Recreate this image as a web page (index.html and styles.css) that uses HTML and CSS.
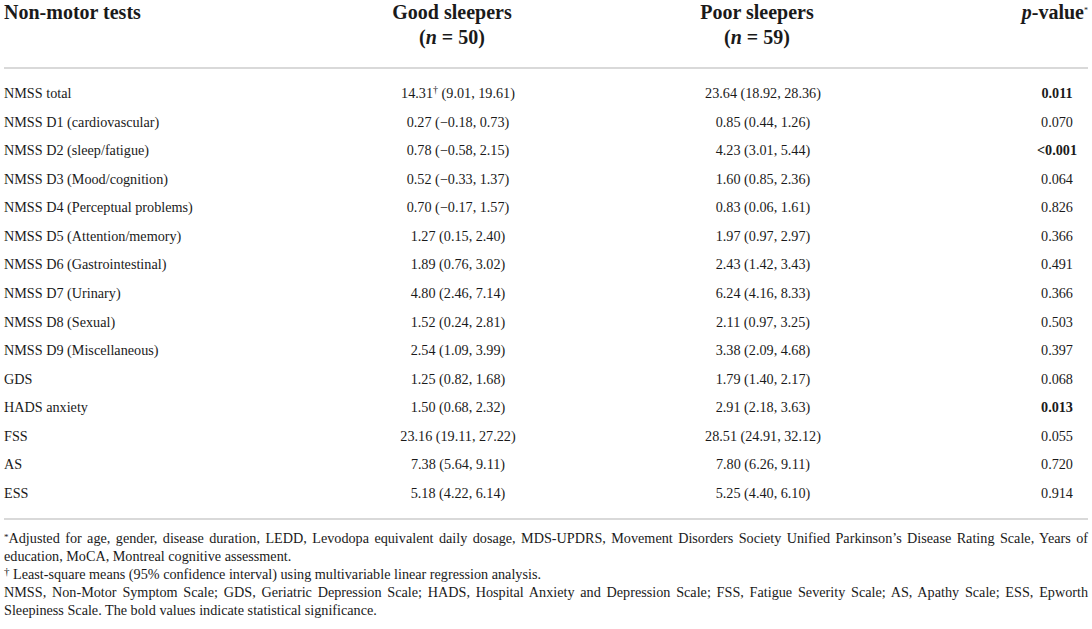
FILE: index.html
```html
<!DOCTYPE html>
<html lang="en">
<head>
<meta charset="utf-8">
<title>Non-motor tests</title>
<link rel="stylesheet" href="styles.css">
</head>
<body>
<div class="page">
  <div class="grid head">
    <div class="c1 hcell">Non-motor tests</div>
    <div class="c2 hcell">Good sleepers<br>(<i>n</i> = 50)</div>
    <div class="c3 hcell">Poor sleepers<br>(<i>n</i> = 59)</div>
    <div class="c4 hcell hp"><i>p</i>-value<sup class="ast">*</sup></div>
  </div>
  <div class="rule"></div>
  <div class="grid body">
    <div class="c1">NMSS total</div><div class="c2">14.31<sup class="dag">†</sup> (9.01, 19.61)</div><div class="c3">23.64 (18.92, 28.36)</div><div class="c4"><b>0.011</b></div>
    <div class="c1">NMSS D1 (cardiovascular)</div><div class="c2">0.27 (−0.18, 0.73)</div><div class="c3">0.85 (0.44, 1.26)</div><div class="c4">0.070</div>
    <div class="c1">NMSS D2 (sleep/fatigue)</div><div class="c2">0.78 (−0.58, 2.15)</div><div class="c3">4.23 (3.01, 5.44)</div><div class="c4"><b>&lt;0.001</b></div>
    <div class="c1">NMSS D3 (Mood/cognition)</div><div class="c2">0.52 (−0.33, 1.37)</div><div class="c3">1.60 (0.85, 2.36)</div><div class="c4">0.064</div>
    <div class="c1">NMSS D4 (Perceptual problems)</div><div class="c2">0.70 (−0.17, 1.57)</div><div class="c3">0.83 (0.06, 1.61)</div><div class="c4">0.826</div>
    <div class="c1">NMSS D5 (Attention/memory)</div><div class="c2">1.27 (0.15, 2.40)</div><div class="c3">1.97 (0.97, 2.97)</div><div class="c4">0.366</div>
    <div class="c1">NMSS D6 (Gastrointestinal)</div><div class="c2">1.89 (0.76, 3.02)</div><div class="c3">2.43 (1.42, 3.43)</div><div class="c4">0.491</div>
    <div class="c1">NMSS D7 (Urinary)</div><div class="c2">4.80 (2.46, 7.14)</div><div class="c3">6.24 (4.16, 8.33)</div><div class="c4">0.366</div>
    <div class="c1">NMSS D8 (Sexual)</div><div class="c2">1.52 (0.24, 2.81)</div><div class="c3">2.11 (0.97, 3.25)</div><div class="c4">0.503</div>
    <div class="c1">NMSS D9 (Miscellaneous)</div><div class="c2">2.54 (1.09, 3.99)</div><div class="c3">3.38 (2.09, 4.68)</div><div class="c4">0.397</div>
    <div class="c1">GDS</div><div class="c2">1.25 (0.82, 1.68)</div><div class="c3">1.79 (1.40, 2.17)</div><div class="c4">0.068</div>
    <div class="c1">HADS anxiety</div><div class="c2">1.50 (0.68, 2.32)</div><div class="c3">2.91 (2.18, 3.63)</div><div class="c4"><b>0.013</b></div>
    <div class="c1">FSS</div><div class="c2">23.16 (19.11, 27.22)</div><div class="c3">28.51 (24.91, 32.12)</div><div class="c4">0.055</div>
    <div class="c1">AS</div><div class="c2">7.38 (5.64, 9.11)</div><div class="c3">7.80 (6.26, 9.11)</div><div class="c4">0.720</div>
    <div class="c1">ESS</div><div class="c2">5.18 (4.22, 6.14)</div><div class="c3">5.25 (4.40, 6.10)</div><div class="c4">0.914</div>
  </div>
  <div class="rule"></div>
  <div class="notes">
    <p><span class="jline"><sup class="nast">*</sup>Adjusted for age, gender, disease duration, LEDD, Levodopa equivalent daily dosage, MDS-UPDRS, Movement Disorders Society Unified Parkinson’s Disease Rating Scale, Years of</span><span class="line">education, MoCA, Montreal cognitive assessment.</span></p>
    <p><span class="line"><sup class="ndag">†</sup> Least-square means (95% confidence interval) using multivariable linear regression analysis.</span></p>
    <p><span class="jline">NMSS, Non-Motor Symptom Scale; GDS, Geriatric Depression Scale; HADS, Hospital Anxiety and Depression Scale; FSS, Fatigue Severity Scale; AS, Apathy Scale; ESS, Epworth</span><span class="line">Sleepiness Scale. The bold values indicate statistical significance.</span></p>
  </div>
</div>
</body>
</html>
```
FILE: styles.css
```css
html, body {
  margin: 0;
  padding: 0;
  background: #ffffff;
}
body {
  font-family: "Liberation Serif", "Times New Roman", serif;
  color: #1a1a1a;
}
.page {
  padding: 0 4px;
  width: 1084px;
}
.grid {
  display: grid;
  grid-template-columns: 302px 304px 306px 1fr;
}
.c2, .c3 {
  text-align: center;
}
.c4 {
  justify-self: end;
  width: 62px;
  text-align: center;
  white-space: nowrap;
}
.head {
  font-size: 20px;
  line-height: 25px;
  font-weight: bold;
  padding-bottom: 17px;
}
.head .c2, .head .c3 {
  padding-right: 12px;
}
.head .hp {
  width: auto;
  text-align: right;
}
.head i {
  font-style: italic;
}
.ast {
  font-size: 8px;
  vertical-align: 6px;
  line-height: 0;
  font-weight: normal;
}
.rule {
  height: 2px;
  background: #d9d9d9;
}
.body {
  font-size: 14.2px;
  line-height: 28.57px;
  padding: 10px 0 11px;
}
.dag {
  font-size: 10px;
  line-height: 0;
  vertical-align: 5px;
}
.notes {
  padding-top: 9px;
  font-size: 14.2px;
  line-height: 18px;
}
.notes p {
  margin: 0;
}
.line {
  display: block;
  white-space: nowrap;
}
.jline {
  display: block;
  text-align: justify;
  text-align-last: justify;
  white-space: nowrap;
  word-spacing: 0;
}
.nast {
  font-size: 9px;
  line-height: 0;
  vertical-align: 3px;
}
.ndag {
  font-size: 11px;
  line-height: 0;
  vertical-align: 4px;
}
```
